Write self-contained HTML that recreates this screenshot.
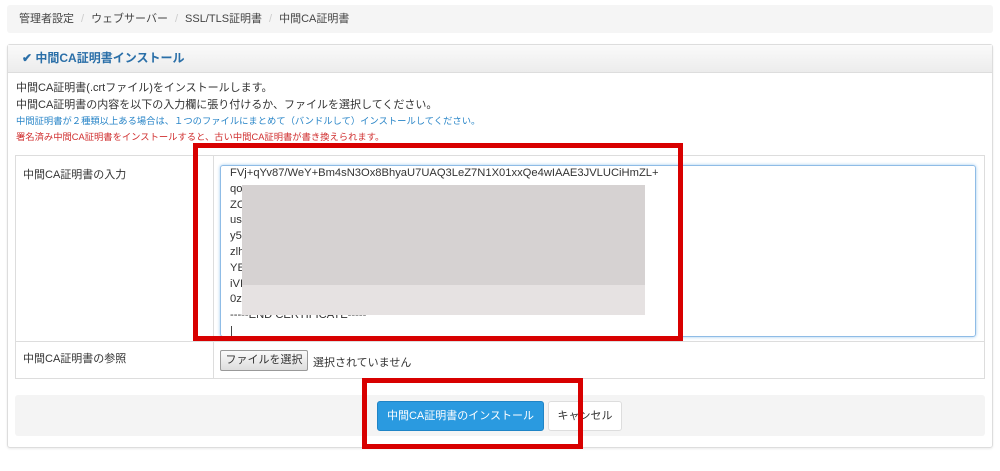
<!DOCTYPE html><html><head><meta charset="utf-8"><style>
body{margin:0;width:1000px;height:471px;background:#fff;font-family:"Liberation Sans","Noto Sans CJK JP",sans-serif;position:relative;overflow:hidden;color:#333}
.a{position:absolute}
.bc{left:7px;top:5px;width:986px;height:28px;background:#f5f5f5;border-radius:3px;font-size:11px;color:#444;line-height:28px}
.bc span{color:#ccc;margin:0 7px}
.panel{left:7px;top:44px;width:984px;height:402px;border:1px solid #ddd;border-radius:3px;box-shadow:0 1px 2px rgba(0,0,0,.08)}
.ph{left:0;top:0;width:984px;height:27px;background:linear-gradient(#fafafa,#ececec);border-bottom:1px solid #ddd;color:#2a6fa8;font-weight:bold;font-size:12px;line-height:27px}
.t{font-size:11px;line-height:17px}
.s{font-size:9.3px;line-height:16px}
.ta{left:220px;top:165px;width:756px;height:172px;border:1px solid #8fbce6;border-radius:3px;box-shadow:0 0 3px #9ecaf0;font-size:11.2px;line-height:15.8px;padding:0 0 0 9px;box-sizing:border-box}
.red{border:5px solid #d80000;box-sizing:border-box}
</style></head><body>
<div class="a bc"><span style="margin:0 0 0 12px"></span>管理者設定<span>/</span>ウェブサーバー<span>/</span>SSL/TLS証明書<span>/</span>中間CA証明書</div>
<div class="a panel">
<div class="a ph"><span style="margin-left:14px">✔ 中間CA証明書インストール</span></div>
<div class="a t" style="left:8px;top:35px">中間CA証明書(.crtファイル)をインストールします。<br>中間CA証明書の内容を以下の入力欄に張り付けるか、ファイルを選択してください。</div>
<div class="a s" style="left:8px;top:68px;color:#2a86c8">中間証明書が２種類以上ある場合は、１つのファイルにまとめて（バンドルして）インストールしてください。</div>
<div class="a s" style="left:8px;top:84px;color:#d03030">署名済み中間CA証明書をインストールすると、古い中間CA証明書が書き換えられます。</div>
</div>
<div class="a" style="left:15px;top:155px;width:970px;height:224px;border:1px solid #ddd;box-sizing:border-box"></div>
<div class="a" style="left:213px;top:155px;width:1px;height:224px;background:#ddd"></div>
<div class="a" style="left:15px;top:341px;width:970px;height:1px;background:#ddd"></div>
<div class="a" style="left:23px;top:166px;font-size:11px">中間CA証明書の入力</div>
<div class="a" style="left:23px;top:350px;font-size:11px">中間CA証明書の参照</div>
<div class="a ta">FVj+qYv87/WeY+Bm4sN3Ox8BhyaU7UAQ3LeZ7N1X01xxQe4wIAAE3JVLUCiHmZL+<br>qo<br>ZC<br>us<br>y5<br>zlh<br>YE<br>iVI<br>0z<br>-----END CERTIFICATE-----<br>|</div>
<div class="a" style="left:242px;top:185px;width:403px;height:130px;background:#d6d2d2"></div>
<div class="a" style="left:242px;top:285px;width:403px;height:30px;background:#e6e2e2"></div>
<div class="a" style="left:220px;top:350px;width:88px;height:21px;border:1px solid #999;border-radius:2px;background:linear-gradient(#fafafa,#ddd);font-size:11px;line-height:19px;text-align:center;box-sizing:border-box">ファイルを選択</div>
<div class="a" style="left:313px;top:354px;font-size:11px">選択されていません</div>
<div class="a" style="left:15px;top:395px;width:970px;height:41px;background:#f4f4f4;border-radius:3px"></div>
<div class="a" style="left:377px;top:401px;width:167px;height:30px;background:#2a9ae0;border:1px solid #1f84c6;border-radius:3px;box-sizing:border-box;color:#fff;font-size:11px;line-height:28px;text-align:center">中間CA証明書のインストール</div>
<div class="a" style="left:548px;top:401px;width:74px;height:30px;background:#fff;border:1px solid #ddd;border-radius:3px;box-sizing:border-box;font-size:11px;line-height:28px;text-align:center">キャンセル</div>
<div class="a red" style="left:193px;top:143px;width:490px;height:198px"></div>
<div class="a red" style="left:362px;top:378px;width:221px;height:71px"></div>
</body></html>
